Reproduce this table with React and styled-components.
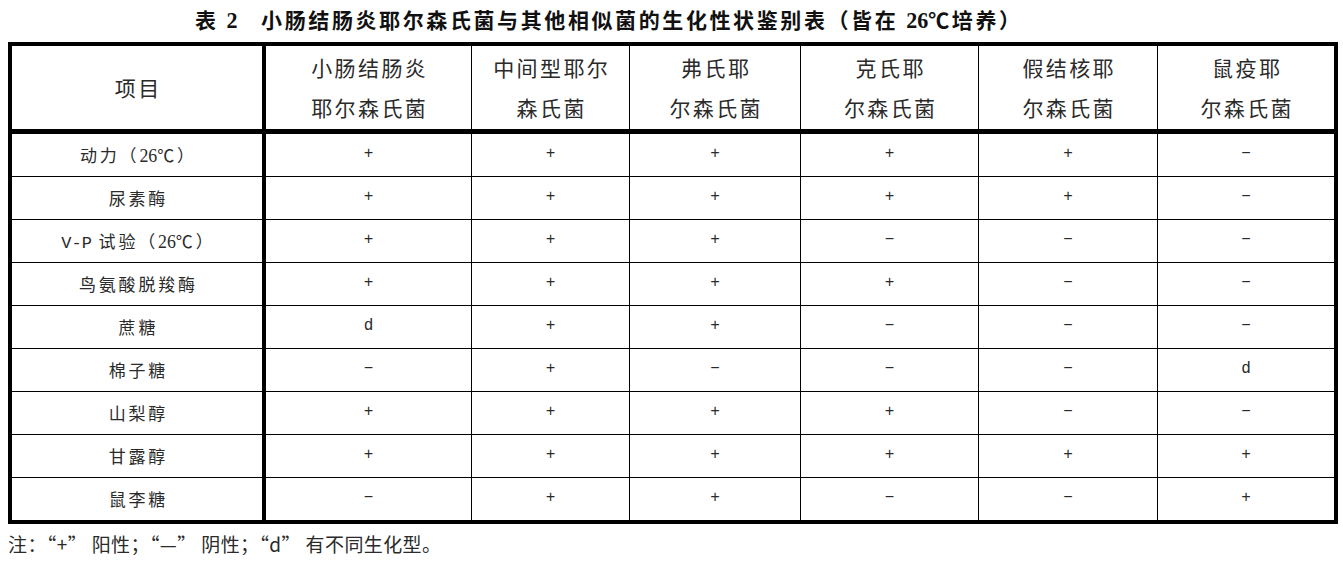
import React from "react";
import styled, { createGlobalStyle } from "styled-components";

const Global = createGlobalStyle`
  html, body { margin: 0; padding: 0; background: #fff; }
  body { font-family: "Liberation Serif", "Noto Sans CJK SC", serif; color: #222; }
`;

const Page = styled.div`
  width: 1343px;
  height: 564px;
  padding-left: 8px;
  box-sizing: border-box;
  overflow: hidden;
`;

const Title = styled.h1`
  margin: 0;
  height: 42px;
  line-height: 42px;
  padding-left: 187px;
  font-family: "Liberation Serif", "Noto Sans CJK SC", serif;
  font-size: 21px;
  font-weight: 700;
  letter-spacing: 2.6px;
  color: #111;
  white-space: nowrap;
`;

const Num = styled.span`
  font-family: "Liberation Serif", serif;
  letter-spacing: 0;
  font-size: 1.05em;
`;

const Grid = styled.div`
  display: grid;
  grid-template-columns: 254px 206px 158px 171px 178px 179px 176px;
  width: 1330px;
  box-sizing: border-box;
  border: 4px solid #000;
`;

const Cell = styled.div`
  box-sizing: border-box;
  display: flex;
  align-items: center;
  justify-content: center;
  text-align: center;
  border-right: ${(p) => (p.$first ? "4px" : p.$last ? "0" : "1px")} solid #000;
  color: #2a2a2a;
`;

const HeadCell = styled(Cell)`
  height: 88px;
  border-bottom: 5px solid #000;
  font-family: "Noto Sans CJK SC", sans-serif;
  font-size: 21px;
  line-height: 40px;
  letter-spacing: 2.4px;
  padding-left: 2.4px;
  padding-bottom: 2px;
  flex-direction: column;
`;

const BodyCell = styled(Cell)`
  height: ${(p) => (p.$lastRow ? "42px" : "43px")};
  border-bottom: ${(p) => (p.$lastRow ? "0" : "1px solid #000")};
  padding-bottom: 2px;
  font-size: ${(p) => (p.$first ? "17px" : "16px")};
  letter-spacing: ${(p) => (p.$first ? "2.8px" : "0")};
  padding-left: ${(p) => (p.$first ? "2.8px" : "0")};
  font-family: ${(p) =>
    p.$sign ? '"Liberation Mono", monospace' : '"Noto Sans CJK SC", sans-serif'};
`;

const Mono = styled.span`
  font-family: "Liberation Mono", monospace;
  letter-spacing: 0;
`;

const Note = styled.p`
  margin: 0;
  height: 40px;
  line-height: 40px;
  font-family: "Noto Sans CJK SC", sans-serif;
  font-size: 19px;
  letter-spacing: 0.4px;
  color: #2a2a2a;
  white-space: nowrap;
`;

const headers = [
  ["项目"],
  ["小肠结肠炎", "耶尔森氏菌"],
  ["中间型耶尔", "森氏菌"],
  ["弗氏耶", "尔森氏菌"],
  ["克氏耶", "尔森氏菌"],
  ["假结核耶", "尔森氏菌"],
  ["鼠疫耶", "尔森氏菌"],
];

const M = "−";
const rows = [
  ["MOTION", "+", "+", "+", "+", "+", M],
  ["尿素酶", "+", "+", "+", "+", "+", M],
  ["VP", "+", "+", "+", M, M, M],
  ["鸟氨酸脱羧酶", "+", "+", "+", "+", M, M],
  ["蔗糖", "d", "+", "+", M, M, M],
  ["棉子糖", M, "+", M, M, M, "d"],
  ["山梨醇", "+", "+", "+", "+", M, M],
  ["甘露醇", "+", "+", "+", "+", "+", "+"],
  ["鼠李糖", M, "+", "+", M, M, "+"],
];

function label(text) {
  if (text === "VP") {
    return (
      <span>
        <Mono>V-P</Mono> 试验（<Num>26</Num>℃）
      </span>
    );
  }
  if (text === "MOTION") {
    return (
      <span>
        动力（<Num>26</Num>℃）
      </span>
    );
  }
  return text;
}

export default function App() {
  return (
    <Page>
      <Global />
      <Title>
        表 <Num>2</Num>　小肠结肠炎耶尔森氏菌与其他相似菌的生化性状鉴别表（皆在 <Num>26</Num>℃培养）
      </Title>
      <Grid>
        {headers.map((lines, i) => (
          <HeadCell key={i} $first={i === 0} $last={i === headers.length - 1}>
            {lines.map((l) => (
              <span key={l}>{l}</span>
            ))}
          </HeadCell>
        ))}
        {rows.map((row, r) =>
          row.map((v, c) => (
            <BodyCell
              key={r + "-" + c}
              $first={c === 0}
              $last={c === row.length - 1}
              $lastRow={r === rows.length - 1}
              $sign={c > 0}
            >
              {c === 0 ? label(v) : v}
            </BodyCell>
          ))
        )}
      </Grid>
      <Note>注：“+” 阳性；“—” 阴性；“d” 有不同生化型。</Note>
    </Page>
  );
}
